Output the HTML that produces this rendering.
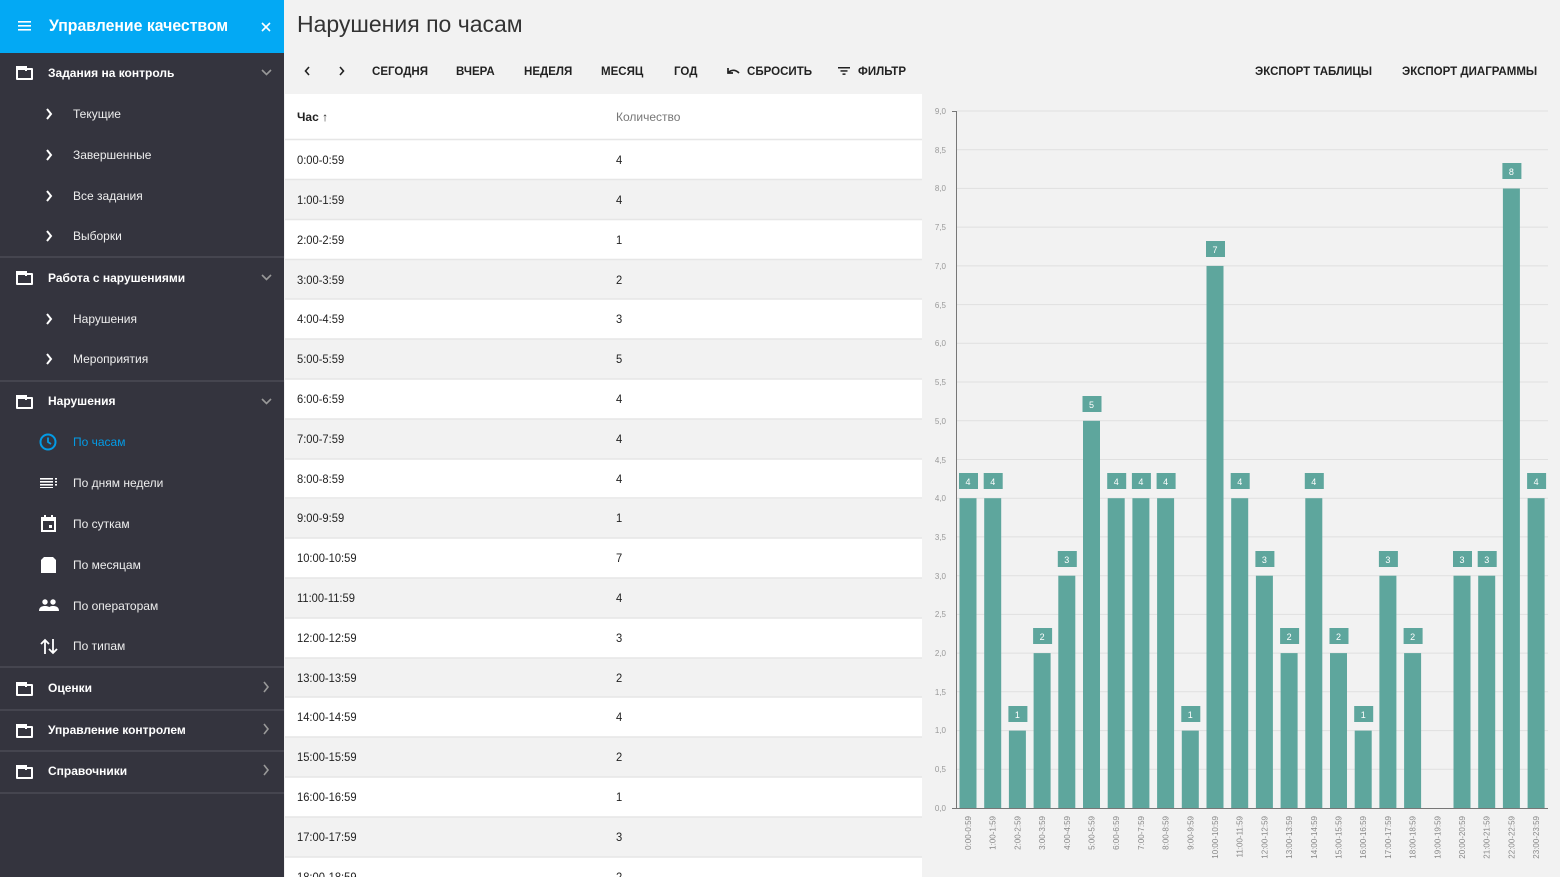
<!DOCTYPE html>
<html style="overflow:hidden;height:877px"><head><meta charset="utf-8"><style>
*{margin:0;padding:0;box-sizing:border-box}
body{width:1560px;height:877px;overflow:hidden;background:#f2f2f2;font-family:"Liberation Sans",sans-serif;position:relative}
#sb{position:absolute;left:0;top:0;width:284px;height:877px;background:#34343e;color:#fff}
#hd{position:absolute;left:0;top:0;width:284px;height:53px;background:#03a9f4}
.t{position:absolute;white-space:nowrap}
.g{font-size:12px;font-weight:bold;left:48px}
.s{font-size:12px;left:73px;color:#eee}
.dv{position:absolute;left:0;width:284px;height:2px;background:#45454f}
.fold{position:absolute;left:16px;width:17px;height:12px;border:2px solid #fff;border-radius:1px}
.fold:before{content:"";position:absolute;left:-2px;top:-4px;width:7px;height:3px;border:2px solid #fff;border-bottom:none}
.btn{position:absolute;top:64px;font-size:12px;font-weight:bold;color:#222;white-space:nowrap;transform-origin:0 0;transform:scaleX(0.96)}
.row{position:absolute;left:285px;width:637px;height:40px;font-size:12px;color:#222}
.row span{position:absolute;top:13px;transform-origin:0 0;transform:scaleX(0.93)}
</style></head><body>
<div id="sb">
<div id="hd">
<svg style="position:absolute;left:18px;top:21px" width="13" height="10"><rect y="0" width="13" height="1.6" fill="#fff"/><rect y="4" width="13" height="1.6" fill="#fff"/><rect y="8" width="13" height="1.6" fill="#fff"/></svg>
<div class="t" style="left:49px;top:16px;font-size:17px;font-weight:bold;color:#fff;transform-origin:0 0;transform:scaleX(0.93)">Управление качеством</div>
<svg style="position:absolute;left:261px;top:22px" width="10" height="10"><path d="M1 1L9 9M9 1L1 9" stroke="#fff" stroke-width="1.6"/></svg>
</div>
<div class="fold" style="top:68px"></div><div class="t g" style="top:66px">Задания на контроль</div>
<svg style="position:absolute;left:261px;top:69px" width="11" height="7"><path d="M1 1l4.5 4.5L10 1" stroke="#999" stroke-width="1.6" fill="none"/></svg>
<div class="t s" style="top:107px">Текущие</div>
<div class="t s" style="top:148px">Завершенные</div>
<div class="t s" style="top:189px">Все задания</div>
<div class="t s" style="top:229px">Выборки</div>
<svg style="position:absolute;left:45px;top:0" width="10" height="260"><g stroke="#fff" stroke-width="2" fill="none"><path d="M2 109l4 5-4 5"/><path d="M2 150l4 5-4 5"/><path d="M2 191l4 5-4 5"/><path d="M2 231l4 5-4 5"/></g></svg>
<div class="dv" style="top:256px"></div>
<div class="fold" style="top:273px"></div><div class="t g" style="top:271px">Работа с нарушениями</div>
<svg style="position:absolute;left:261px;top:274px" width="11" height="7"><path d="M1 1l4.5 4.5L10 1" stroke="#999" stroke-width="1.6" fill="none"/></svg>
<div class="t s" style="top:312px">Нарушения</div>
<div class="t s" style="top:352px">Мероприятия</div>
<svg style="position:absolute;left:45px;top:300px" width="10" height="80"><g stroke="#fff" stroke-width="2" fill="none"><path d="M2 14l4 5-4 5"/><path d="M2 54l4 5-4 5"/></g></svg>
<div class="dv" style="top:380px"></div>
<div class="fold" style="top:397px"></div><div class="t g" style="top:394px">Нарушения</div>
<svg style="position:absolute;left:261px;top:398px" width="11" height="7"><path d="M1 1l4.5 4.5L10 1" stroke="#999" stroke-width="1.6" fill="none"/></svg>
<svg style="position:absolute;left:39px;top:433px" width="18" height="18"><circle cx="9" cy="9" r="7.5" stroke="#039be5" stroke-width="2" fill="none"/><path d="M9 4.5V9l3 2" stroke="#039be5" stroke-width="1.8" fill="none"/></svg>
<div class="t s" style="top:435px;color:#039be5">По часам</div>
<svg style="position:absolute;left:40px;top:478px" width="18" height="10"><g fill="#fff"><rect width="13" height="1.6"/><rect y="3" width="13" height="1.6"/><rect y="6" width="13" height="1.6"/><rect y="9" width="13" height="1"/><rect x="15" width="2" height="1.6"/><rect x="15" y="3" width="2" height="1.6"/><rect x="15" y="6" width="2" height="1.6"/></g></svg>
<div class="t s" style="top:476px">По дням недели</div>
<svg style="position:absolute;left:41px;top:515px" width="15" height="17"><rect x="1" y="3" width="13" height="13" stroke="#fff" stroke-width="2" fill="none"/><rect x="1" y="3" width="13" height="3" fill="#fff"/><rect x="3" y="0" width="2" height="4" fill="#fff"/><rect x="10" y="0" width="2" height="4" fill="#fff"/><rect x="8" y="10" width="3" height="3" fill="#fff"/></svg>
<div class="t s" style="top:517px">По суткам</div>
<svg style="position:absolute;left:41px;top:557px" width="15" height="16"><path d="M3 0h9l3 3v13H0V3z" fill="#fff"/></svg>
<div class="t s" style="top:558px">По месяцам</div>
<svg style="position:absolute;left:39px;top:599px" width="20" height="12"><g fill="#fff"><circle cx="6" cy="3" r="2.7"/><circle cx="14" cy="3" r="2.7"/><path d="M0 12c0-4 3-5 6-5s6 1 6 5z"/><path d="M9 12c0-4 2-5 5-5s6 1 6 5z"/></g></svg>
<div class="t s" style="top:599px">По операторам</div>
<svg style="position:absolute;left:40px;top:638px" width="18" height="17"><g stroke="#fff" stroke-width="1.8" fill="none"><path d="M5 16V2M1 6l4-4 4 4"/><path d="M13 1v14M9 11l4 4 4-4"/></g></svg>
<div class="t s" style="top:639px">По типам</div>
<div class="dv" style="top:666px"></div>
<div class="fold" style="top:684px"></div><div class="t g" style="top:681px">Оценки</div>
<div class="dv" style="top:709px"></div>
<div class="fold" style="top:726px"></div><div class="t g" style="top:723px">Управление контролем</div>
<div class="dv" style="top:750px"></div>
<div class="fold" style="top:767px"></div><div class="t g" style="top:764px">Справочники</div>
<div class="dv" style="top:792px"></div>
<svg style="position:absolute;left:262px;top:680px" width="8" height="100"><g stroke="#999" stroke-width="1.6" fill="none"><path d="M2 2l4 5-4 5"/><path d="M2 44l4 5-4 5"/><path d="M2 85l4 5-4 5"/></g></svg>
</div>

<div class="t" style="left:297px;top:11px;font-size:23px;color:#333">Нарушения по часам</div>
<svg style="position:absolute;left:303px;top:66px" width="44" height="10"><g stroke="#222" stroke-width="1.6" fill="none"><path d="M6 1l-3.5 4L6 9"/><path d="M37 1l3.5 4L37 9"/></g></svg>
<div class="btn" style="left:372px">СЕГОДНЯ</div>
<div class="btn" style="left:456px">ВЧЕРА</div>
<div class="btn" style="left:524px">НЕДЕЛЯ</div>
<div class="btn" style="left:601px">МЕСЯЦ</div>
<div class="btn" style="left:674px">ГОД</div>
<svg style="position:absolute;left:727px;top:67px" width="13" height="8"><path d="M1 1v5h5M1.5 5.5C4 3 8 2 12 6" stroke="#222" stroke-width="1.7" fill="none"/></svg>
<div class="btn" style="left:747px">СБРОСИТЬ</div>
<svg style="position:absolute;left:838px;top:67px" width="12" height="8"><g fill="#222"><rect width="12" height="1.5"/><rect x="2.5" y="3.2" width="7" height="1.5"/><rect x="4.5" y="6.4" width="3" height="1.5"/></g></svg>
<div class="btn" style="left:858px">ФИЛЬТР</div>
<div class="btn" style="left:1255px">ЭКСПОРТ ТАБЛИЦЫ</div>
<div class="btn" style="left:1402px">ЭКСПОРТ ДИАГРАММЫ</div>

<div style="position:absolute;left:285px;top:94px;width:637px;height:45px;background:#fff">
<div class="t" style="left:12px;top:16px;font-size:12px;font-weight:bold;color:#222">Час ↑</div>
<div class="t" style="left:331px;top:16px;font-size:12px;color:#777">Количество</div>
</div>
<div class="row" style="top:140px;background:#fff"><span style="left:12px">0:00-0:59</span><span style="left:331px">4</span></div>
<div class="row" style="top:180px"><span style="left:12px">1:00-1:59</span><span style="left:331px">4</span></div>
<div class="row" style="top:220px;background:#fff"><span style="left:12px">2:00-2:59</span><span style="left:331px">1</span></div>
<div class="row" style="top:260px"><span style="left:12px">3:00-3:59</span><span style="left:331px">2</span></div>
<div class="row" style="top:299px;background:#fff"><span style="left:12px">4:00-4:59</span><span style="left:331px">3</span></div>
<div class="row" style="top:339px"><span style="left:12px">5:00-5:59</span><span style="left:331px">5</span></div>
<div class="row" style="top:379px;background:#fff"><span style="left:12px">6:00-6:59</span><span style="left:331px">4</span></div>
<div class="row" style="top:419px"><span style="left:12px">7:00-7:59</span><span style="left:331px">4</span></div>
<div class="row" style="top:459px;background:#fff"><span style="left:12px">8:00-8:59</span><span style="left:331px">4</span></div>
<div class="row" style="top:498px"><span style="left:12px">9:00-9:59</span><span style="left:331px">1</span></div>
<div class="row" style="top:538px;background:#fff"><span style="left:12px">10:00-10:59</span><span style="left:331px">7</span></div>
<div class="row" style="top:578px"><span style="left:12px">11:00-11:59</span><span style="left:331px">4</span></div>
<div class="row" style="top:618px;background:#fff"><span style="left:12px">12:00-12:59</span><span style="left:331px">3</span></div>
<div class="row" style="top:658px"><span style="left:12px">13:00-13:59</span><span style="left:331px">2</span></div>
<div class="row" style="top:697px;background:#fff"><span style="left:12px">14:00-14:59</span><span style="left:331px">4</span></div>
<div class="row" style="top:737px"><span style="left:12px">15:00-15:59</span><span style="left:331px">2</span></div>
<div class="row" style="top:777px;background:#fff"><span style="left:12px">16:00-16:59</span><span style="left:331px">1</span></div>
<div class="row" style="top:817px"><span style="left:12px">17:00-17:59</span><span style="left:331px">3</span></div>
<div class="row" style="top:857px;height:20px;background:#fff"><span style="left:12px">18:00-18:59</span><span style="left:331px">2</span></div>
<svg style="position:absolute;left:285px;top:94px" width="637" height="783"><g stroke="#e6e6e6" stroke-width="1.5"><path d="M0 45.5H637M0 85.5H637M0 125.5H637M0 165.5H637M0 205H637M0 245H637M0 285H637M0 325H637M0 365H637M0 404H637M0 444H637M0 484H637M0 524H637M0 564H637M0 603H637M0 643H637M0 683H637M0 723H637M0 763H637"/></g></svg>

<svg style="position:absolute;left:0;top:0" width="1560" height="877" font-family="Liberation Sans,sans-serif">
<g stroke="#e0e0e0" stroke-width="1">
<path d="M957 769.3H1548M957 730.6H1548M957 691.8H1548M957 653.1H1548M957 614.4H1548M957 575.7H1548M957 536.9H1548M957 498.2H1548M957 459.5H1548M957 420.8H1548M957 382H1548M957 343.3H1548M957 304.6H1548M957 265.9H1548M957 227.1H1548M957 188.4H1548M957 149.7H1548M957 111H1548"/>
</g>
<g font-size="8" fill="#999" text-anchor="end">
<text x="946" y="811">0,0</text><text x="946" y="772">0,5</text><text x="946" y="733">1,0</text><text x="946" y="695">1,5</text><text x="946" y="656">2,0</text><text x="946" y="617">2,5</text><text x="946" y="579">3,0</text><text x="946" y="540">3,5</text><text x="946" y="501">4,0</text><text x="946" y="463">4,5</text><text x="946" y="424">5,0</text><text x="946" y="385">5,5</text><text x="946" y="346">6,0</text><text x="946" y="308">6,5</text><text x="946" y="269">7,0</text><text x="946" y="230">7,5</text><text x="946" y="191">8,0</text><text x="946" y="153">8,5</text><text x="946" y="114">9,0</text>
</g>
<g fill="#5ea69d">
<rect x="959.5" y="498.2" width="17" height="309.8"/><rect x="959" y="473" width="19" height="16"/>
<rect x="984.2" y="498.2" width="17" height="309.8"/><rect x="983.7" y="473" width="19" height="16"/>
<rect x="1008.9" y="730.6" width="17" height="77.4"/><rect x="1008.4" y="706" width="19" height="16"/>
<rect x="1033.6" y="653.1" width="17" height="154.9"/><rect x="1033.1" y="628" width="19" height="16"/>
<rect x="1058.3" y="575.7" width="17" height="232.3"/><rect x="1057.8" y="551" width="19" height="16"/>
<rect x="1083" y="420.8" width="17" height="387.2"/><rect x="1082.5" y="396" width="19" height="16"/>
<rect x="1107.7" y="498.2" width="17" height="309.8"/><rect x="1107.2" y="473" width="19" height="16"/>
<rect x="1132.4" y="498.2" width="17" height="309.8"/><rect x="1131.9" y="473" width="19" height="16"/>
<rect x="1157.1" y="498.2" width="17" height="309.8"/><rect x="1156.6" y="473" width="19" height="16"/>
<rect x="1181.8" y="730.6" width="17" height="77.4"/><rect x="1181.3" y="706" width="19" height="16"/>
<rect x="1206.5" y="265.9" width="17" height="542.1"/><rect x="1206" y="241" width="19" height="16"/>
<rect x="1231.2" y="498.2" width="17" height="309.8"/><rect x="1230.7" y="473" width="19" height="16"/>
<rect x="1255.9" y="575.7" width="17" height="232.3"/><rect x="1255.4" y="551" width="19" height="16"/>
<rect x="1280.6" y="653.1" width="17" height="154.9"/><rect x="1280.1" y="628" width="19" height="16"/>
<rect x="1305.3" y="498.2" width="17" height="309.8"/><rect x="1304.8" y="473" width="19" height="16"/>
<rect x="1330" y="653.1" width="17" height="154.9"/><rect x="1329.5" y="628" width="19" height="16"/>
<rect x="1354.7" y="730.6" width="17" height="77.4"/><rect x="1354.2" y="706" width="19" height="16"/>
<rect x="1379.4" y="575.7" width="17" height="232.3"/><rect x="1378.9" y="551" width="19" height="16"/>
<rect x="1404.1" y="653.1" width="17" height="154.9"/><rect x="1403.6" y="628" width="19" height="16"/>
<rect x="1453.5" y="575.7" width="17" height="232.3"/><rect x="1453" y="551" width="19" height="16"/>
<rect x="1478.2" y="575.7" width="17" height="232.3"/><rect x="1477.7" y="551" width="19" height="16"/>
<rect x="1502.9" y="188.5" width="17" height="619.5"/><rect x="1502.4" y="163" width="19" height="16"/>
<rect x="1527.6" y="498.2" width="17" height="309.8"/><rect x="1527.1" y="473" width="19" height="16"/>
</g>
<g font-size="9" fill="#fff" text-anchor="middle">
<text x="968" y="485">4</text><text x="992.7" y="485">4</text><text x="1017.4" y="718">1</text><text x="1042.1" y="640">2</text><text x="1066.8" y="563">3</text><text x="1091.5" y="408">5</text><text x="1116.2" y="485">4</text><text x="1140.9" y="485">4</text><text x="1165.6" y="485">4</text><text x="1190.3" y="718">1</text><text x="1215" y="253">7</text><text x="1239.7" y="485">4</text><text x="1264.4" y="563">3</text><text x="1289.1" y="640">2</text><text x="1313.8" y="485">4</text><text x="1338.5" y="640">2</text><text x="1363.2" y="718">1</text><text x="1387.9" y="563">3</text><text x="1412.6" y="640">2</text><text x="1462" y="563">3</text><text x="1486.7" y="563">3</text><text x="1511.4" y="175">8</text><text x="1536.1" y="485">4</text>
</g>
<path d="M956.5 111V808.5H1548" stroke="#777" stroke-width="1" fill="none"/>
<g stroke="#777"><path d="M952 111.5h4M952 808.5h4"/></g>
<g font-size="8" fill="#888" text-anchor="end">
<text transform="translate(971,816) rotate(-90)">0:00-0:59</text>
<text transform="translate(995.7,816) rotate(-90)">1:00-1:59</text>
<text transform="translate(1020.4,816) rotate(-90)">2:00-2:59</text>
<text transform="translate(1045.1,816) rotate(-90)">3:00-3:59</text>
<text transform="translate(1069.8,816) rotate(-90)">4:00-4:59</text>
<text transform="translate(1094.5,816) rotate(-90)">5:00-5:59</text>
<text transform="translate(1119.2,816) rotate(-90)">6:00-6:59</text>
<text transform="translate(1143.9,816) rotate(-90)">7:00-7:59</text>
<text transform="translate(1168.6,816) rotate(-90)">8:00-8:59</text>
<text transform="translate(1193.3,816) rotate(-90)">9:00-9:59</text>
<text transform="translate(1218,816) rotate(-90)">10:00-10:59</text>
<text transform="translate(1242.7,816) rotate(-90)">11:00-11:59</text>
<text transform="translate(1267.4,816) rotate(-90)">12:00-12:59</text>
<text transform="translate(1292.1,816) rotate(-90)">13:00-13:59</text>
<text transform="translate(1316.8,816) rotate(-90)">14:00-14:59</text>
<text transform="translate(1341.5,816) rotate(-90)">15:00-15:59</text>
<text transform="translate(1366.2,816) rotate(-90)">16:00-16:59</text>
<text transform="translate(1390.9,816) rotate(-90)">17:00-17:59</text>
<text transform="translate(1415.6,816) rotate(-90)">18:00-18:59</text>
<text transform="translate(1440.3,816) rotate(-90)">19:00-19:59</text>
<text transform="translate(1465,816) rotate(-90)">20:00-20:59</text>
<text transform="translate(1489.7,816) rotate(-90)">21:00-21:59</text>
<text transform="translate(1514.4,816) rotate(-90)">22:00-22:59</text>
<text transform="translate(1539.1,816) rotate(-90)">23:00-23:59</text>
</g>
</svg>
</body></html>
